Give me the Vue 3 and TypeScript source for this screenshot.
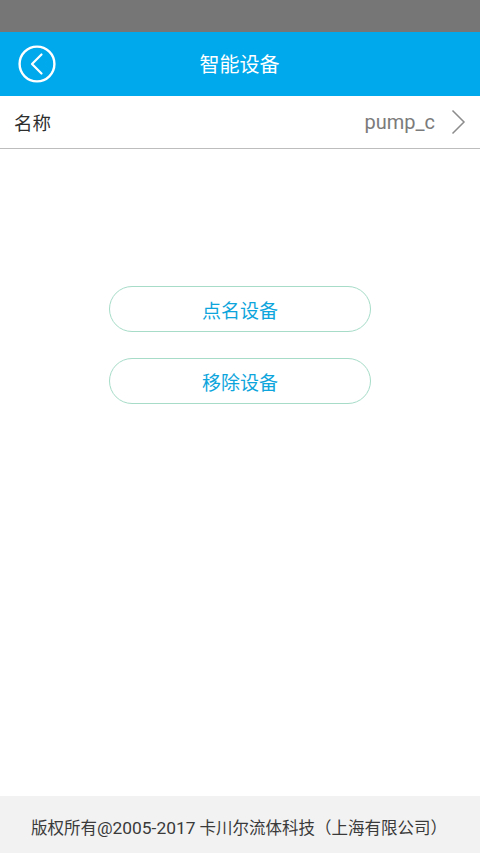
<script setup lang="ts">
const title = '智能设备'
const actions: string[] = ['点名设备', '移除设备']
</script>

<template>
  <div class="page">
    <div class="status"></div>
    <header class="bar">
      <svg class="back" width="38" height="38" viewBox="0 0 38 38" fill="none" stroke="#fff">
        <circle cx="19" cy="19" r="17.4" stroke-width="2.4" />
        <path d="M23.5 9.5 L14 19 L23.5 28.5" stroke-width="2.2" stroke-linecap="round" stroke-linejoin="round" />
      </svg>
      <span class="title">{{ title }}</span>
    </header>
    <div class="row">
      <span class="label">名称</span>
      <span class="value">pump_c</span>
      <svg class="chev" width="16" height="26" viewBox="0 0 16 26" fill="none" stroke="#8c8c8c" stroke-width="1.5">
        <path d="M1.5 1.5 L13 13 L1.5 24.5" />
      </svg>
    </div>
    <main class="main">
      <button v-for="a in actions" :key="a" class="btn">{{ a }}</button>
    </main>
    <footer class="foot"><span>版权所有<span class="num">@2005-2017</span> 卡川尔流体科技（上海有限公司）</span></footer>
  </div>
</template>

<style scoped>
.page {
  width: 480px;
  height: 853px;
  display: flex;
  flex-direction: column;
  background: #fff;
  font-family: "Roboto", "Noto Sans CJK SC", sans-serif;
  overflow: hidden;
}
.status {
  height: 32px;
  background: #767676;
}
.bar {
  height: 64px;
  background: #00a8ec;
  display: flex;
  align-items: center;
  justify-content: center;
  position: relative;
  padding-bottom: 2px;
  box-sizing: border-box;
}
.back {
  position: absolute;
  left: 18px;
  top: 13px;
}
.title {
  color: #fff;
  font-size: 20px;
  margin-left: -1px;
}
.row {
  height: 52px;
  border-bottom: 1px solid #bdbdbd;
  display: flex;
  align-items: center;
  padding: 0 14px;
}
.label {
  font-size: 18.5px;
  color: #2e2e2e;
  flex: 1;
  margin-top: -1px;
}
.value {
  font-size: 20px;
  color: #7b7b7b;
  margin-right: 16px;
}
.chev {
  margin-right: -1px;
  margin-top: -1px;
}
.main {
  flex: 1;
  display: flex;
  flex-direction: column;
  align-items: center;
  gap: 26px;
  padding-top: 137px;
}
.btn {
  width: 262px;
  height: 46px;
  border: 1px solid #a6dcc8;
  border-radius: 23px;
  background: #fff;
  color: #0ea5dc;
  font-family: inherit;
  font-size: 19px;
  padding: 1px 0 0;
}
.foot {
  height: 57px;
  background: #f2f2f2;
  display: flex;
  align-items: center;
  justify-content: center;
  font-size: 16.5px;
  color: #3a3a3a;
  white-space: nowrap;
  padding: 5px 2px 0 0;
  box-sizing: border-box;
}
.num {
  font-size: 17.4px;
}
</style>
